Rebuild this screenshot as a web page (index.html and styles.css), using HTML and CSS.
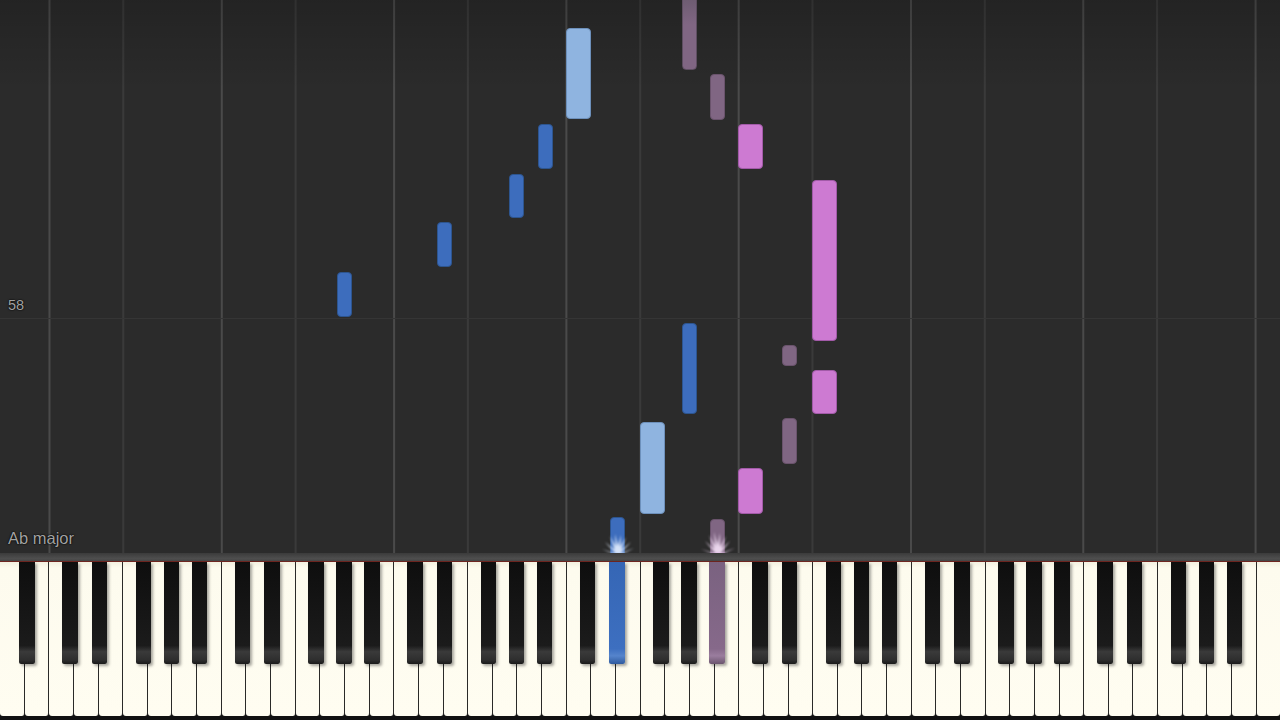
FILE: index.html
```html
<!DOCTYPE html>
<html>
<head>
<meta charset="utf-8">
<link rel="stylesheet" href="styles.css">
</head>
<body>
<div class="app">
  <div class="roll">
    <div class="hline"></div>
    <span class="label measure">58</span>
    <span class="label key-sig">Ab major</span>

    <div class="note lh-b" style="left:337px;top:272px;height:45px"></div>
    <div class="note lh-b" style="left:437px;top:222px;height:45px"></div>
    <div class="note lh-b" style="left:509px;top:174px;height:44px"></div>
    <div class="note lh-b" style="left:538px;top:124px;height:45px"></div>
    <div class="note lh-w" style="left:566px;top:28px;height:91px"></div>
    <div class="note lh-b" style="left:682px;top:323px;height:91px"></div>
    <div class="note lh-w" style="left:640px;top:422px;height:92px"></div>
    <div class="note lh-b" style="left:610px;top:517px;height:40px"></div>

    <div class="note rh-b fade-top" style="left:682px;top:-6px;height:76px"></div>
    <div class="note rh-b" style="left:710px;top:74px;height:46px"></div>
    <div class="note rh-w" style="left:738px;top:124px;height:45px"></div>
    <div class="note rh-w" style="left:812px;top:180px;height:161px"></div>
    <div class="note rh-b" style="left:782px;top:345px;height:21px"></div>
    <div class="note rh-w" style="left:812px;top:370px;height:44px"></div>
    <div class="note rh-b" style="left:782px;top:418px;height:46px"></div>
    <div class="note rh-w" style="left:738px;top:468px;height:46px"></div>
    <div class="note rh-b" style="left:710px;top:519px;height:38px"></div>

    <svg class="spark" style="left:597px" width="42" height="30" viewBox="0 0 42 30">
      <defs>
        <filter id="soft" x="-30%" y="-30%" width="160%" height="160%">
          <feGaussianBlur stdDeviation="0.8"/>
        </filter>
        <radialGradient id="glowB" cx="50%" cy="85%" r="50%">
          <stop offset="0" stop-color="#ffffff" stop-opacity="1"/>
          <stop offset="0.5" stop-color="#d8e8ff" stop-opacity="0.8"/>
          <stop offset="1" stop-color="#9cc0ff" stop-opacity="0"/>
        </radialGradient>
        <radialGradient id="glowP" cx="50%" cy="85%" r="50%">
          <stop offset="0" stop-color="#ffffff" stop-opacity="1"/>
          <stop offset="0.5" stop-color="#f4d6f6" stop-opacity="0.85"/>
          <stop offset="1" stop-color="#d8a0e0" stop-opacity="0"/>
        </radialGradient>
      </defs>
      <g filter="url(#soft)" fill="#e6f0ff" opacity="0.9">
        <polygon points="19,27 23,27 8,15"/>
        <polygon points="19,27 23,27 13,9"/>
        <polygon points="19,26 23,26 18,7"/>
        <polygon points="19,26 23,26 24,8"/>
        <polygon points="19,27 23,27 29,10"/>
        <polygon points="19,27 23,27 34,15"/>
        <polygon points="18,28 22,28 5,22"/>
        <polygon points="20,28 24,28 37,21"/>
      </g>
      <ellipse cx="21" cy="26" rx="13" ry="5" fill="url(#glowB)"/>
    </svg>
    <svg class="spark" style="left:697px" width="42" height="30" viewBox="0 0 42 30">
      <g filter="url(#soft)" fill="#f6e2f8" opacity="0.9">
        <polygon points="19,27 23,27 8,14"/>
        <polygon points="19,27 23,27 12,8"/>
        <polygon points="19,26 23,26 17,5"/>
        <polygon points="19,26 23,26 23,6"/>
        <polygon points="19,27 23,27 29,9"/>
        <polygon points="19,27 23,27 33,14"/>
        <polygon points="18,28 22,28 4,22"/>
        <polygon points="20,28 24,28 38,21"/>
      </g>
      <ellipse cx="21" cy="26" rx="15" ry="6" fill="url(#glowP)"/>
    </svg>
  </div>
  <div class="bar"></div>
  <div class="keyboard">
    <div class="wk"><span class="bk as"></span></div>
    <div class="wk"></div>
    <!-- octave 1 -->
    <div class="wk"><span class="bk cs"></span></div>
    <div class="wk"><span class="bk ds"></span></div>
    <div class="wk"></div>
    <div class="wk"><span class="bk fs"></span></div>
    <div class="wk"><span class="bk gs"></span></div>
    <div class="wk"><span class="bk as"></span></div>
    <div class="wk"></div>
    <!-- octave 2 -->
    <div class="wk"><span class="bk cs"></span></div>
    <div class="wk"><span class="bk ds"></span></div>
    <div class="wk"></div>
    <div class="wk"><span class="bk fs"></span></div>
    <div class="wk"><span class="bk gs"></span></div>
    <div class="wk"><span class="bk as"></span></div>
    <div class="wk"></div>
    <!-- octave 3 -->
    <div class="wk"><span class="bk cs"></span></div>
    <div class="wk"><span class="bk ds"></span></div>
    <div class="wk"></div>
    <div class="wk"><span class="bk fs"></span></div>
    <div class="wk"><span class="bk gs"></span></div>
    <div class="wk"><span class="bk as"></span></div>
    <div class="wk"></div>
    <!-- octave 4 -->
    <div class="wk"><span class="bk cs"></span></div>
    <div class="wk"><span class="bk ds pressed-blue"></span></div>
    <div class="wk"></div>
    <div class="wk"><span class="bk fs"></span></div>
    <div class="wk"><span class="bk gs"></span></div>
    <div class="wk"><span class="bk as pressed-purple"></span></div>
    <div class="wk"></div>
    <!-- octave 5 -->
    <div class="wk"><span class="bk cs"></span></div>
    <div class="wk"><span class="bk ds"></span></div>
    <div class="wk"></div>
    <div class="wk"><span class="bk fs"></span></div>
    <div class="wk"><span class="bk gs"></span></div>
    <div class="wk"><span class="bk as"></span></div>
    <div class="wk"></div>
    <!-- octave 6 -->
    <div class="wk"><span class="bk cs"></span></div>
    <div class="wk"><span class="bk ds"></span></div>
    <div class="wk"></div>
    <div class="wk"><span class="bk fs"></span></div>
    <div class="wk"><span class="bk gs"></span></div>
    <div class="wk"><span class="bk as"></span></div>
    <div class="wk"></div>
    <!-- octave 7 -->
    <div class="wk"><span class="bk cs"></span></div>
    <div class="wk"><span class="bk ds"></span></div>
    <div class="wk"></div>
    <div class="wk"><span class="bk fs"></span></div>
    <div class="wk"><span class="bk gs"></span></div>
    <div class="wk"><span class="bk as"></span></div>
    <div class="wk"></div>
    <!-- C8 -->
    <div class="wk"></div>
  </div>
</div>
</body>
</html>
```
FILE: styles.css
```css
html, body {
  margin: 0;
  padding: 0;
  background: #2a2a2a;
  overflow: hidden;
}

.app {
  width: 1280px;
  height: 720px;
  display: flex;
  flex-direction: column;
  font-family: "Liberation Sans", Arial, sans-serif;
}

.roll {
  position: relative;
  height: 553px;
  flex: none;
  overflow: visible;
  background-color: #2b2b2b;
  background-image:
    linear-gradient(to bottom, rgba(0,0,0,0.18) 0, rgba(0,0,0,0) 90px),
    linear-gradient(to right, #4a4a4a 0, #4a4a4a 1.5px, transparent 1.5px),
    linear-gradient(to right, #3a3a3a 0, #3a3a3a 1.5px, transparent 1.5px);
  background-size: 100% 100%, 172.31px 100%, 172.31px 100%;
  background-position: 0 0, 48.5px 0, 122.3px 0;
  background-repeat: no-repeat, repeat-x, repeat-x;
  z-index: 1;
}

.hline {
  position: absolute;
  left: 0;
  right: 0;
  top: 318px;
  height: 1px;
  background: #353535;
}

.label {
  position: absolute;
  left: 8px;
  color: #a2a2a2;
  text-shadow: 0 0 2px #000, 0 0 1px #000;
}

.measure {
  top: 297px;
  font-size: 14.5px;
}

.key-sig {
  top: 529px;
  font-size: 16.5px;
}

.note {
  position: absolute;
  width: 15px;
  border-radius: 4px;
  box-sizing: border-box;
}

.lh-b {
  background: #3d6dbd;
  border: 1px solid #2d558f;
}

.lh-w {
  width: 25px;
  background: #8fb4e0;
  border: 1px solid #6d90bb;
}

.rh-w {
  width: 25px;
  background: #cd7ad2;
  border: 1px solid #a25aa8;
}

.rh-b {
  background: #806683;
  border: 1px solid #6a536c;
}

.fade-top {
  background: linear-gradient(to bottom, #6a5a6e 0, #806683 40%);
  border-color: #5e4e61;
}

.spark {
  position: absolute;
  top: 527px;
  z-index: 5;
}

.bar {
  height: 8px;
  flex: none;
  background: linear-gradient(to bottom, #3b3b3b 0, #4e4e4e 70%, #454545 100%);
  border-bottom: 1px solid #6e2520;
  position: relative;
  z-index: 2;
}

.keyboard {
  flex: 1;
  display: flex;
  background: #111;
  padding-bottom: 4px;
}

.wk {
  flex: 1 1 0;
  position: relative;
  background: linear-gradient(to bottom, #f3f0e0 0, #fdfbee 6px, #fffdf1 100%);
  border-right: 1.5px solid #2a2a28;
  border-radius: 0 0 3px 3px;
}

.wk:last-child {
  border-right: none;
}

.bk {
  position: absolute;
  top: 0;
  width: 15.5px;
  height: 102px;
  z-index: 3;
  box-sizing: border-box;
  border-radius: 0 0 2px 2px;
  background:
    linear-gradient(to bottom, #0e0e0e 0, #1b1b1b 82%, #3a3a3a 88%, #2e2e2e 96%, #1a1a1a 100%);
  box-shadow: 2px 2px 3px rgba(0,0,0,0.35);
}

.cs { left: calc(100% - 7.75px - 3px); }
.ds { left: calc(100% - 7.75px + 2px); }
.fs { left: calc(100% - 7.75px - 3.5px); }
.gs { left: calc(100% - 7.75px); }
.as { left: calc(100% - 7.75px + 3.5px); }

.pressed-blue {
  background: linear-gradient(to bottom, #3566b5 0, #3d6fc0 85%, #5584cc 92%, #2f5a9e 100%);
}

.pressed-purple {
  background: linear-gradient(to bottom, #7a6280 0, #86698a 85%, #9a7d9e 92%, #6b556e 100%);
}
```
